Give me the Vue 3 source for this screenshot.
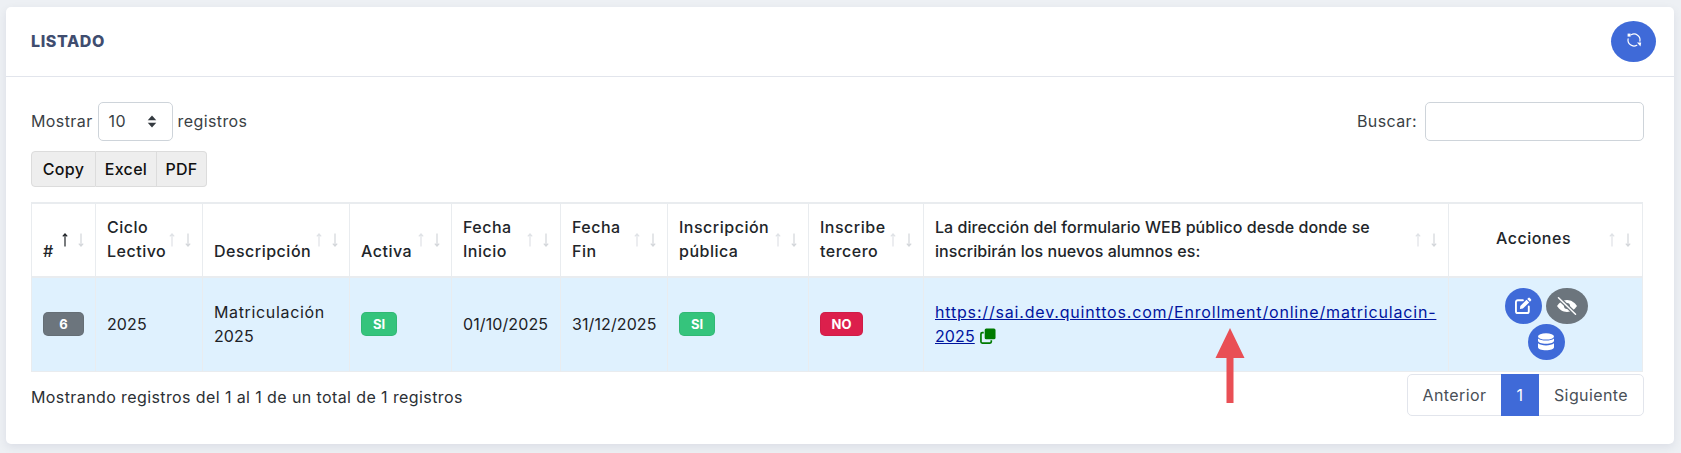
<script setup>
const cols = [
  { cls: 'c1', lines: ['#'] },
  { cls: 'c2', lines: ['Ciclo', 'Lectivo'] },
  { cls: 'c3', lines: ['Descripción'] },
  { cls: 'c4', lines: ['Activa'] },
  { cls: 'c5', lines: ['Fecha', 'Inicio'] },
  { cls: 'c6', lines: ['Fecha', 'Fin'] },
  { cls: 'c7', lines: ['Inscripción', 'pública'] },
  { cls: 'c8', lines: ['Inscribe', 'tercero'] },
  { cls: 'c9', lines: ['La dirección del formulario WEB público desde donde se', 'inscribirán los nuevos alumnos es:'] },
  { cls: 'c10', lines: ['Acciones'], center: true }
]
</script>

<template>
  <div class="page">
    <section class="card">
      <header class="card-head">
        <h2 class="title">LISTADO</h2>
        <button class="refresh" type="button" aria-label="Actualizar">
          <svg viewBox="0 0 16 16" width="16" height="16" fill="none" stroke="#fff" stroke-width="1.2" stroke-linecap="round">
            <path d="M5.200 2.700A6 6 0 0 1 13.900 9.100" />
            <path d="M10.800 13.300A6 6 0 0 1 2.100 6.900" />
            <path d="M1.600 1.600h3v3h-3z" fill="#fff" stroke="none" />
            <path d="M11 10.600h4.200l-.7 3.800z" fill="#fff" stroke="none" />
          </svg>
        </button>
      </header>

      <div class="card-body">
        <div class="toolbar">
          <label class="length">
            <span>Mostrar</span>
            <span class="select">
              <span>10</span>
              <svg viewBox="0 0 10 14" width="10" height="13" fill="#343a40">
                <path d="M5 0.6 9.6 5.6H0.4z" />
                <path d="M5 13.400 0.4 8.400H9.600z" />
              </svg>
            </span>
            <span>registros</span>
          </label>
          <label class="search">
            <span>Buscar:</span>
            <span class="input"></span>
          </label>
        </div>

        <div class="export">
          <button type="button">Copy</button>
          <button type="button">Excel</button>
          <button type="button">PDF</button>
        </div>

        <table class="grid">
          <thead>
            <tr>
              <th v-for="(c, i) in cols" :key="i" :class="[c.cls, { center: c.center }]">
                <span v-for="l in c.lines" :key="l" class="line">{{ l }}</span>
                <svg class="sort" viewBox="0 0 24 14" width="24" height="14" fill="none" stroke-width="1.2">
                  <g :stroke="i === 0 ? '#212529' : '#dfe2e6'">
                    <path d="M4 13.500V1M1.800 3.400 4 1l2.200 2.400" />
                  </g>
                  <g stroke="#d3d6da">
                    <path d="M20 .5V13M17.800 10.600 20 13l2.200-2.400" />
                  </g>
                </svg>
              </th>
            </tr>
          </thead>
          <tbody>
            <tr>
              <td><span class="badge gray wide">6</span></td>
              <td class="num">2025</td>
              <td class="desc"><span class="line">Matriculación</span><span class="line num">2025</span></td>
              <td><span class="badge green">SI</span></td>
              <td class="num">01/10/2025</td>
              <td class="num">31/12/2025</td>
              <td><span class="badge green">SI</span></td>
              <td><span class="badge red">NO</span></td>
              <td class="url">
                <a class="link" href="#">https://sai.dev.quinttos.com/Enrollment/online/matriculacin-<br /><span class="num">2025</span></a>
                <svg class="copy" viewBox="0 0 17 17" width="16" height="16">
                  <rect x="5" y="0.5" width="11.500" height="11.500" rx="1.600" fill="#007a00" />
                  <path d="M4 5H2.400A1.400 1.400 0 0 0 1 6.400v8.200A1.400 1.400 0 0 0 2.400 16h8.200a1.400 1.400 0 0 0 1.400-1.400V13" fill="none" stroke="#007a00" stroke-width="1.800" />
                </svg>
              </td>
              <td>
                <div class="actions">
                  <button class="act blue" type="button" aria-label="Editar">
                    <svg viewBox="0 0 18 18" width="17" height="17">
                      <path d="M15.800 1.200l1 1a1.200 1.200 0 0 1 0 1.700l-1 1-2.800-2.800 1-1a1.200 1.200 0 0 1 1.800.1zM12.200 2.900 15 5.700 8.400 12.300l-3.200.5.4-3.300z" fill="#fff" />
                      <path d="M8.400 3.400H3a2 2 0 0 0-2 2V15a2 2 0 0 0 2 2h9.600a2 2 0 0 0 2-2V10" fill="none" stroke="#fff" stroke-width="2" stroke-linecap="round" />
                    </svg>
                  </button>
                  <button class="act gray eye" type="button" aria-label="Ocultar">
                    <svg viewBox="0 0 22 18" width="22" height="18">
                      <path d="M11 3C6.500 3 3 6 1 9c2 3 5.500 6 10 6s8-3 10-6c-2-3-5.500-6-10-6z" fill="#fff" />
                      <circle cx="11" cy="9" r="3" fill="#6c757d" />
                      <path d="M2.500 .8 19.500 17.200" stroke="#6c757d" stroke-width="4" />
                      <path d="M2.500 .8 19.500 17.200" stroke="#fff" stroke-width="1.500" stroke-linecap="round" />
                    </svg>
                  </button>
                  <button class="act blue" type="button" aria-label="Datos">
                    <svg viewBox="0 0 16 18" width="16" height="18" fill="#fff">
                      <ellipse cx="8" cy="3.400" rx="8" ry="3.200" />
                      <path d="M0 5.400v2.400c0 1.700 3.600 3 8 3s8-1.300 8-3V5.400c-1.700 1.400-4.700 2.100-8 2.100S1.700 6.800 0 5.400z" />
                      <path d="M0 10.300v3.900c0 1.700 3.600 3 8 3s8-1.300 8-3v-3.900c-1.700 1.400-4.700 2.100-8 2.100s-6.300-.7-8-2.100z" />
                    </svg>
                  </button>
                </div>
              </td>
            </tr>
          </tbody>
        </table>

        <div class="foot">
          <p class="info">Mostrando registros del 1 al 1 de un total de 1 registros</p>
          <nav class="pager">
            <span class="pg prev">Anterior</span>
            <span class="pg on">1</span>
            <span class="pg next">Siguiente</span>
          </nav>
        </div>
      </div>

      <svg class="annot" viewBox="0 0 30 76" width="30" height="76">
        <path d="M15 0 29.500 30H18.500V75H11.500V30H.5z" fill="#e94f55" />
      </svg>
    </section>
  </div>
</template>

<style>
html, body { margin: 0; background: #edf0f4; }
</style>

<style scoped>
.page {
  box-sizing: border-box;
  width: 1681px;
  height: 453px;
  padding: 7px 7px 0 6px;
  background: #edf0f4;
  font-family: Inter, "Noto Sans", sans-serif;
  font-size: 16px;
  letter-spacing: 0.4px;
  line-height: 24px;
  color: #212529;
  overflow: hidden;
}
.card {
  position: relative;
  box-sizing: border-box;
  height: 437px;
  background: #fff;
  border-radius: 5px;
  box-shadow: 0 3px 10px rgba(8, 10, 70, 0.08);
}
.card-head {
  box-sizing: border-box;
  height: 70px;
  border-bottom: 1px solid #e2e5ec;
  display: flex;
  align-items: center;
  justify-content: space-between;
  padding: 0 18px 0 25px;
}
.title {
  margin: 0 0 2px;
  font-size: 16px;
  letter-spacing: 0.6px;
  font-weight: 800;
  color: #3f4d6f;
}
.refresh {
  width: 45px;
  height: 41px;
  border: 0;
  padding: 0 0 3px;
  border-radius: 50%;
  background: #3f6ad8;
  display: flex;
  align-items: center;
  justify-content: center;
}
.card-body {
  padding: 25px 30px 0 25px;
}
.toolbar {
  display: flex;
  justify-content: space-between;
  align-items: center;
  height: 38px;
}
.length, .search {
  display: flex;
  align-items: center;
  gap: 5px;
  color: #3a3f45;
}
.search { gap: 8px; }
.select {
  box-sizing: border-box;
  width: 75px;
  height: 39px;
  border: 1px solid #ced4da;
  border-radius: 5px;
  display: flex;
  align-items: center;
  justify-content: space-between;
  padding: 0 15px 0 10px;
}
.input {
  box-sizing: border-box;
  width: 219px;
  height: 39px;
  border: 1px solid #ced4da;
  border-radius: 5px;
}
.export {
  display: inline-flex;
  margin-top: 11px;
  vertical-align: top;
  height: 36px;
}
.export button {
  box-sizing: border-box;
  height: 36px;
  border: 1px solid #dcdcdc;
  border-left-width: 0;
  background: #eee;
  font: 500 16px/24px Inter, "Noto Sans", sans-serif;
  letter-spacing: 0.3px;
  color: #111;
  padding: 0;
}
.export button:first-child {
  width: 65px;
  border-left-width: 1px;
  border-radius: 4px 0 0 4px;
}
.export button:nth-child(2) { width: 61px; }
.export button:last-child {
  width: 50px;
  border-radius: 0 4px 4px 0;
}
.grid {
  display: table;
  margin-top: 15px;
  width: 1612px;
  table-layout: fixed;
  border-collapse: separate;
  border-spacing: 0;
}
th, td {
  box-sizing: border-box;
  padding: 0 10px 2px 11px;
  border-left: 1px solid #e9ecef;
  text-align: left;
}
th:last-child, td:last-child { border-right: 1px solid #e9ecef; }
th {
  position: relative;
  height: 76px;
  font-weight: 450;
  letter-spacing: 0.5px;
  border-top: 2px solid #e9ecef;
  border-bottom: 2px solid #e9ecef;
  vertical-align: bottom;
  padding-bottom: 13px;
  color: #212529;
}
th.center {
  vertical-align: middle;
  text-align: center;
  padding: 0 36px 4px 12px;
}
td {
  height: 94px;
  background: #dff1fe;
  border-bottom: 1px solid #e9ecef;
  vertical-align: middle;
  color: #1c2126;
}
.c1 { width: 64px; }
.c2 { width: 107px; }
.c3 { width: 147px; }
.c4 { width: 102px; }
.c5 { width: 109px; }
.c6 { width: 107px; }
.c7 { width: 141px; }
.c8 { width: 115px; }
.c9 { width: 525px; letter-spacing: 0.06px; }
.c10 { width: 195px; }
.num { letter-spacing: 0.1px; }
.desc { letter-spacing: 0.65px; }
.line { display: block; white-space: nowrap; }
.sort {
  position: absolute;
  right: 10px;
  top: 29px;
}
.badge {
  display: inline-block;
  box-sizing: border-box;
  height: 24px;
  min-width: 36px;
  border-radius: 5px;
  border: 1px solid rgba(0, 0, 0, 0.06);
  font-size: 13px;
  letter-spacing: 0;
  font-weight: 700;
  line-height: 22px;
  text-align: center;
  color: #fff;
  padding: 0 8px;
  vertical-align: middle;
}
.gray { background: #6c757d; }
.green { background: #35c47c; }
.red { background: #dc1f4c; min-width: 43px; }
.wide { width: 41px; }
.link {
  color: #00149e;
  text-decoration: underline;
  white-space: nowrap;
  letter-spacing: 0.82px;
}
.copy {
  margin-left: 5px;
  vertical-align: -2px;
}
.actions {
  width: 90px;
  margin: 0 auto;
  display: flex;
  flex-wrap: wrap;
  justify-content: center;
  gap: 0 4px;
}
.act {
  width: 37px;
  height: 36px;
  border: 0;
  padding: 0;
  border-radius: 50%;
  display: flex;
  align-items: center;
  justify-content: center;
}
.act.blue { background: #3f6ad8; }
.act.eye { width: 42px; }
.foot {
  display: flex;
  justify-content: space-between;
  align-items: flex-start;
  padding-top: 2px;
}
.info {
  margin: 11px 0 0;
  color: #2b3035;
}
.pager {
  display: flex;
  height: 42px;
  box-sizing: border-box;
  border: 1px solid #e2e5ec;
  border-radius: 5px;
  color: #495057;
  line-height: 40px;
}
.pg { text-align: center; }
.prev { width: 93px; }
.next { width: 104px; }
.on {
  width: 38px;
  margin: -1px 0;
  line-height: 42px;
  background: #3f6ad8;
  color: #fff;
}
.annot {
  position: absolute;
  left: 1209px;
  top: 321px;
}
</style>
